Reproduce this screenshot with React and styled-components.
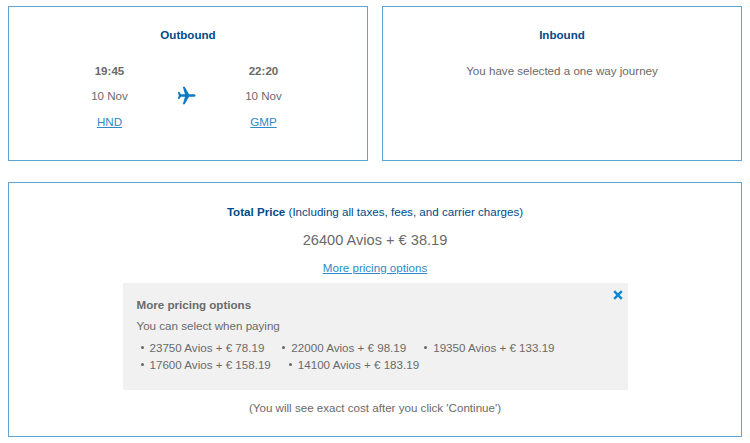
import React from "react";
import styled, { createGlobalStyle } from "styled-components";

const Global = createGlobalStyle`
  html, body { margin: 0; padding: 0; background: #fff; }
  body { font-family: "Liberation Sans", Arial, sans-serif; font-size: 11.6px; color: #6a6a6a; }
`;
const Page = styled.div`
  width: 750px; height: 443px; box-sizing: border-box; padding: 6px 8px 0;
  display: flex; flex-direction: column; gap: 21px;
`;
const Top = styled.div`display: grid; grid-template-columns: 360px 360px; gap: 14px;`;
const Card = styled.section`
  box-sizing: border-box; border: 1px solid #5ea5d6; background: #fff;
  height: ${p => p.$h}px; display: flex; flex-direction: column; align-items: center;
`;
const JourneyTitle = styled.h2`
  margin: 21px 0 0; font-size: 11.6px; line-height: 14px; font-weight: 700; color: #004a8c;
`;
const Journey = styled.div`
  margin: 22px 3px 0 0; display: grid; grid-template-columns: 60px 94px 60px; justify-items: center; align-items: center;
`;
const Stop = styled.div`display: flex; flex-direction: column; align-items: center;`;
const Time = styled.div`font-weight: 700; line-height: 14px; height: 14px;`;
const DateText = styled.div`margin-top: 11px; line-height: 14px;`;
const Code = styled.a`
  margin-top: 12px; line-height: 14px; color: #2d8ac7; text-decoration: underline; cursor: pointer;
`;
const OneWay = styled.p`margin: 22px 0 0; line-height: 14px;`;
const PriceTitle = styled.div`margin-top: 22px; line-height: 14px; color: #004a8c;`;
const Strong = styled.strong`font-weight: 700;`;
const Total = styled.div`margin-top: 13px; font-size: 14.6px; line-height: 16px;`;
const MoreLink = styled.a`
  margin-top: 13px; line-height: 14px; color: #2d8ac7; text-decoration: underline; cursor: pointer;
`;
const Panel = styled.div`
  position: relative; margin-top: 8px; width: 505px; height: 107px; box-sizing: border-box;
  background: #f1f1f1; padding: 15px 14px 0;
`;
const Close = styled.svg`position: absolute; top: 7px; right: 5px; width: 10px; height: 10px;`;
const PanelTitle = styled.div`font-weight: 700; line-height: 14px;`;
const PanelSub = styled.div`margin-top: 7px; line-height: 14px;`;
const Options = styled.ul`
  margin: 6px 0 0; padding: 0; list-style: none; display: flex; flex-wrap: wrap;
`;
const Option = styled.li`
  display: flex; align-items: center; line-height: 14px; height: 17px; padding-left: 4px; margin-right: 14px;
  &::before {
    content: ""; width: 3px; height: 3px; border-radius: 50%; background: #666; margin-right: 6px;
  }
`;
const Note = styled.div`margin-top: 11px; line-height: 14px;`;
const PlaneIcon = styled.svg`width: 19px; height: 19px; margin-bottom: 2px; fill: #0b7cc2;`;

const Plane = () => (
  <PlaneIcon viewBox="0 0 24 24" aria-hidden="true">
    <path d="M23.5 12c0-1.1-1.4-1.7-2.7-1.7h-5.6L9.7 1H7.3l2.8 9.3H5L2.9 7.5H1l1.3 4.5L1 16.5h1.9L5 13.7h5.1L7.3 23h2.4l5.5-9.3h5.6c1.3 0 2.7-.6 2.7-1.7z" />
  </PlaneIcon>
);

const options = ["23750 Avios + € 78.19", "22000 Avios + € 98.19", "19350 Avios + € 133.19", "17600 Avios + € 158.19", "14100 Avios + € 183.19"];

export default function App() {
  return (
    <Page>
      <Global />
      <Top>
        <Card $h={155}>
          <JourneyTitle>Outbound</JourneyTitle>
          <Journey>
            <Stop>
              <Time>19:45</Time>
              <DateText>10 Nov</DateText>
              <Code>HND</Code>
            </Stop>
            <Plane />
            <Stop>
              <Time>22:20</Time>
              <DateText>10 Nov</DateText>
              <Code>GMP</Code>
            </Stop>
          </Journey>
        </Card>
        <Card $h={155}>
          <JourneyTitle>Inbound</JourneyTitle>
          <OneWay>You have selected a one way journey</OneWay>
        </Card>
      </Top>
      <Card $h={255}>
        <PriceTitle><Strong>Total Price</Strong> (Including all taxes, fees, and carrier charges)</PriceTitle>
        <Total>26400 Avios + € 38.19</Total>
        <MoreLink>More pricing options</MoreLink>
        <Panel>
          <Close viewBox="0 0 10 10"><path d="M1.2 1.2l7.6 7.6M8.8 1.2L1.2 8.8" stroke="#0b86d1" strokeWidth="2.4" /></Close>
          <PanelTitle>More pricing options</PanelTitle>
          <PanelSub>You can select when paying</PanelSub>
          <Options>
            {options.map(o => <Option key={o}>{o}</Option>)}
          </Options>
        </Panel>
        <Note>(You will see exact cost after you click 'Continue')</Note>
      </Card>
    </Page>
  );
}
